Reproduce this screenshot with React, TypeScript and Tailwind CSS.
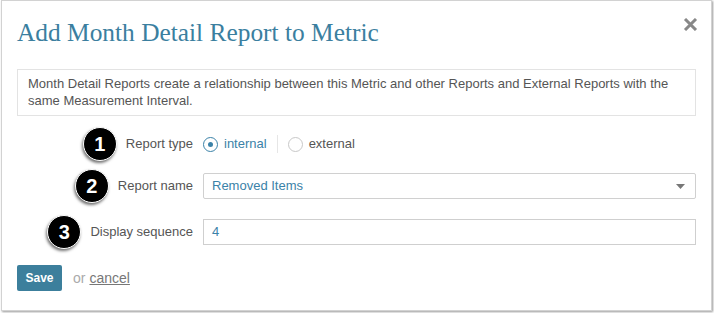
import React from 'react'

interface BadgeProps {
  n: number
}

const Badge: React.FC<BadgeProps> = ({ n }) => (
  <div className="w-[34px] h-[34px] shrink-0 rounded-full bg-black border-[1.5px] border-white shadow-[-1px_2px_3px_rgba(0,0,0,0.55)] flex items-center justify-center text-white font-bold text-[20px] leading-none">
    {n}
  </div>
)

interface RowProps {
  n: number
  label: string
  children: React.ReactNode
}

const Row: React.FC<RowProps> = ({ n, label, children }) => (
  <div className="flex items-center h-[26px]">
    <div className="w-[186px] shrink-0 flex items-center justify-end gap-[9px] pr-[10px]">
      <Badge n={n} />
      <span className="text-[13px] text-[#555]">{label}</span>
    </div>
    <div className="flex-1 h-full flex items-center">{children}</div>
  </div>
)

const App: React.FC = () => {
  return (
    <div className="w-[714px] h-[313px] bg-white font-['Liberation_Sans',Arial,sans-serif]">
      <div className="ml-[1px] w-[711px] h-[311px] bg-white border border-[#d2d2d2] shadow-[1px_1px_2px_rgba(0,0,0,0.4)] px-[15px] pt-[16px]">
        <div className="flex justify-between items-start">
          <h2 className="font-['Liberation_Serif',serif] text-[25.4px] leading-[30px] text-[#3b7f9f]">
            Add Month Detail Report to Metric
          </h2>
          <svg className="mt-[1px] mr-[-2px]" width="15" height="13" viewBox="0 0 15 13">
            <path d="M2 1 L13 12 M13 1 L2 12" stroke="#888" strokeWidth="3" />
          </svg>
        </div>

        <div className="mt-[22px] border border-[#e3e3e3] px-[10px] pt-[5px] pb-[6px] text-[13px] leading-[17px] text-[#555]">
          Month Detail Reports create a relationship between this Metric and other Reports and External Reports with the same Measurement Interval.
        </div>

        <div className="mt-[15px]">
          <Row n={1} label="Report type">
            <label className="flex items-center gap-[6px] text-[13px] text-[#3b82a8]">
              <span className="w-[15px] h-[15px] rounded-full border-[1.5px] border-[#3b82a8] flex items-center justify-center">
                <span className="w-[5px] h-[5px] rounded-full bg-[#3b82a8]" />
              </span>
              internal
            </label>
            <span className="mx-[10px] w-px h-[18px] bg-[#e6e6e6]" />
            <label className="flex items-center gap-[6px] text-[13px] text-[#555]">
              <span className="w-[15px] h-[15px] rounded-full border border-[#c8c8c8]" />
              external
            </label>
          </Row>
        </div>

        <div className="mt-[16px]">
          <Row n={2} label="Report name">
            <div className="w-full h-full border border-[#d0d0d0] rounded-[2px] flex items-center justify-between pl-[8px] pr-[10px] text-[13px] text-[#3b82a8]">
              <span>Removed Items</span>
              <svg width="9" height="5" viewBox="0 0 9 5">
                <path d="M0 0 H9 L4.5 5 Z" fill="#777" />
              </svg>
            </div>
          </Row>
        </div>

        <div className="mt-[20px]">
          <Row n={3} label="Display sequence">
            <div className="w-full h-full border border-[#cfcfcf] flex items-center pl-[8px] text-[13px] text-[#3b82a8]">
              4
            </div>
          </Row>
        </div>

        <div className="mt-[20px] flex items-center">
          <button className="w-[45px] h-[26px] bg-[#3c7f9c] rounded-[2px] text-white font-bold text-[12px]">
            Save
          </button>
          <span className="ml-[11px] text-[14px] text-[#aaa]">or</span>
          <a className="ml-[4px] text-[14px] text-[#777] underline">cancel</a>
        </div>
      </div>
    </div>
  )
}

export default App
